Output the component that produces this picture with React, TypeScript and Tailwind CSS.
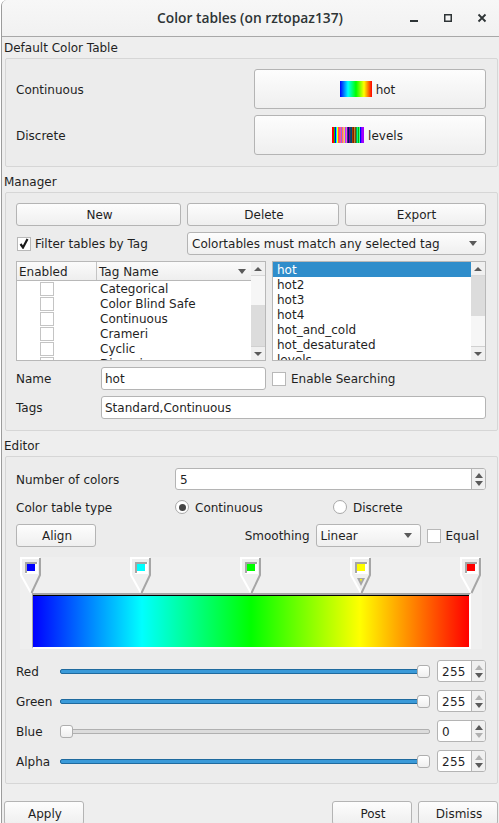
import React from "react";

const ink = "text-[#1f1f1f]";

function Tri({ up, color = "#5a5a5a", w = 9, h = 5 }: { up?: boolean; color?: string; w?: number; h?: number }) {
  return (
    <svg width={w} height={h} viewBox={`0 0 ${w} ${h}`} className="block">
      <polygon points={up ? `${w / 2},0 ${w},${h} 0,${h}` : `0,0 ${w},0 ${w / 2},${h}`} fill={color} />
    </svg>
  );
}

function L({ children, className = "" }: { children: React.ReactNode; className?: string }) {
  return <span className={`pt-[2px] ${className}`}>{children}</span>;
}

function Btn({ children, className = "" }: { children: React.ReactNode; className?: string }) {
  return (
    <div className={`flex items-center justify-center rounded-[3px] border border-[#b4b4b4] bg-linear-to-b from-[#fdfdfd] to-[#efefef] ${className}`}>
      {children}
    </div>
  );
}

function Combo({ text, className = "" }: { text: string; className?: string }) {
  return (
    <div className={`flex items-center justify-between rounded-[3px] border border-[#b4b4b4] bg-linear-to-b from-[#fdfdfd] to-[#efefef] pl-[4px] pr-[8px] ${className}`}>
      <L>{text}</L>
      <Tri w={8} h={5} />
    </div>
  );
}

function Check({ checked }: { checked?: boolean }) {
  return (
    <div className="flex h-[14px] w-[14px] shrink-0 items-center justify-center border border-[#b8b8b8] bg-white">
      {checked && (
        <svg width="10" height="11" viewBox="0 0 10 11">
          <path d="M1.5 6 L4 9.5 L8.5 1" fill="none" stroke="#1a1a1a" strokeWidth="2.2" />
        </svg>
      )}
    </div>
  );
}

function Radio({ on }: { on?: boolean }) {
  return (
    <div className="flex h-[14px] w-[14px] shrink-0 items-center justify-center rounded-full border border-[#a8a8a8] bg-white">
      {on && <div className="h-[7px] w-[7px] rounded-full bg-[#444444]" />}
    </div>
  );
}

function Input({ children, className = "" }: { children?: React.ReactNode; className?: string }) {
  return (
    <div className={`flex items-center rounded-[3px] border border-[#b4b4b4] bg-white pl-[3px] ${className}`}>
      <L>{children}</L>
    </div>
  );
}

function SpinArrows({ upDim, downDim }: { upDim?: boolean; downDim?: boolean }) {
  return (
    <div className="flex w-[14px] shrink-0 flex-col items-center justify-center gap-[3px] self-stretch border-l border-[#b4b4b4] bg-[#f0f0f0]">
      <Tri up color={upDim ? "#b0b0b0" : "#5a5a5a"} w={8} h={5} />
      <Tri color={downDim ? "#b0b0b0" : "#5a5a5a"} w={8} h={5} />
    </div>
  );
}

function Spin({ value, className = "", upDim, downDim }: { value: string; className?: string; upDim?: boolean; downDim?: boolean }) {
  return (
    <div className={`flex items-center overflow-hidden rounded-[3px] border border-[#b4b4b4] bg-white ${className}`}>
      <L className="flex-1 pl-[4px] tracking-[0.3px]">{value}</L>
      <SpinArrows upDim={upDim} downDim={downDim} />
    </div>
  );
}

function ScrollBar({ thumbTop, thumbH, thumbClass, className = "" }: { thumbTop: number; thumbH: number; thumbClass: string; className?: string }) {
  return (
    <div className={`relative flex w-[14px] shrink-0 flex-col justify-between bg-[#f6f6f6] ${className}`}>
      <div className="flex h-[14px] items-center justify-center border-b border-[#d8d8d8] bg-[#f0f0f0]">
        <Tri up w={8} h={4} />
      </div>
      <div className={`absolute left-0 right-0 ${thumbClass}`} style={{ top: thumbTop, height: thumbH }} />
      <div className="flex h-[14px] items-center justify-center border-t border-[#d0d0d0] bg-[#f0f0f0]">
        <Tri w={8} h={4} />
      </div>
    </div>
  );
}

function Group({ children, className = "" }: { children: React.ReactNode; className?: string }) {
  return (
    <div className={`ml-[3px] w-[493px] rounded-[2px] border border-[#d6d6d6] bg-[#ececec] pb-[11px] pl-[10px] pr-[11px] pt-[10px] ${className}`}>
      {children}
    </div>
  );
}

const stripes = [
  "#ff0000", "#ff0000", "#00d000", "#0000ff", "#00ffff", "#ffff00", "#ff6030", "#ff40a0",
  "#ff50a0", "#a060e0", "#ff8040", "#ff80c0", "#e0e040", "#a040ff", "#ff40ff", "#404060",
  "#000080", "#800080", "#204060", "#004080", "#a04000", "#802000", "#c08030", "#805000",
  "#00a060", "#00ff80", "#00c000", "#40ff80", "#0000ff", "#8000ff", "#a000ff", "#a000ff",
];

function LevelsIcon() {
  return (
    <svg width="32" height="16" className="block shrink-0">
      {stripes.map((c, i) => (
        <rect key={i} x={i} y={0} width={1} height={16} fill={c} />
      ))}
    </svg>
  );
}

function Marker({ left, color, active }: { left: number; color: string; active?: boolean }) {
  return (
    <svg width="22" height="37" viewBox="0 0 22 37" className="absolute top-0" style={{ left }}>
      <path d="M1 0 V18 L11 36" fill="none" stroke="#ffffff" strokeWidth="2" />
      <path d="M1 1 H20" fill="none" stroke="#ffffff" strokeWidth="2" />
      <path d="M20 1 V18 L11.5 36" fill="none" stroke="#a6a6a6" strokeWidth="2" />
      <rect x="5" y="5" width="13" height="12" fill="#ffffff" />
      <path d="M5 16 V5 H17 V7 H7 V16 Z" fill="#a6a6a6" />
      <rect x="7" y="7" width="8" height="7" fill={color} />
      {active && (
        <>
          <polygon points="7,21 15,21 11,29" fill="#a6a6a6" />
          <polygon points="10,22 12,22 11,25" fill={color} />
        </>
      )}
    </svg>
  );
}

function SliderRow({ label, value, on }: { label: string; value: string; on: boolean }) {
  return (
    <div className="flex h-[22px] items-center">
      <L className="w-[44px] shrink-0">{label}</L>
      <div className="relative flex h-[13px] w-[370px] shrink-0 items-center">
        {on ? (
          <div className="h-[5px] w-full rounded-[2px] border border-[#1f6a9e] bg-[#3a9ad9]" />
        ) : (
          <div className="h-[5px] w-full rounded-[2px] border border-[#b0b0b0] bg-[#dcdcdc]" />
        )}
        <div className={`absolute top-0 h-[13px] w-[13px] rounded-[3px] border border-[#aeaeae] bg-linear-to-b from-[#ffffff] to-[#efefef] ${on ? "right-0" : "left-0"}`} />
      </div>
      <Spin value={value} className="ml-auto h-[22px] w-[49px]" upDim={value === "255"} downDim={value === "0"} />
    </div>
  );
}

export default function App() {
  return (
    <div className={`flex h-[823px] w-[499px] flex-col overflow-hidden bg-white text-[12px] leading-[15px] ${ink} font-['DejaVu_Sans',sans-serif]`}>
      <div className="ml-[1px] flex h-[823px] flex-col overflow-hidden rounded-tl-[6px] border-l border-[#9c9c9c] bg-[#eeeeee]">
        {/* title bar */}
        <div className="flex h-[37px] shrink-0 items-center border-b border-[#a8a8a8] bg-linear-to-b from-[#f7f7f7] to-[#f1f1f1] pr-[12px]">
          <div className="flex-1 pb-[2px] pl-[155px] font-['Open_Sans',sans-serif] text-[13.8px] font-semibold text-[#2e3436]">
            Color tables (on rztopaz137)
          </div>
          <div className="flex items-center gap-[24px]">
            <svg width="10" height="10" viewBox="0 0 10 10" className="block">
              <rect x="1" y="7" width="8" height="2" fill="#2e3436" />
            </svg>
            <svg width="10" height="10" viewBox="0 0 10 10" className="block">
              <rect x="1.75" y="1.75" width="6.5" height="6.5" fill="none" stroke="#2e3436" strokeWidth="1.5" />
            </svg>
            <svg width="10" height="10" viewBox="0 0 10 10" className="block">
              <path d="M1.5 1.5 L8.5 8.5 M8.5 1.5 L1.5 8.5" stroke="#2e3436" strokeWidth="1.8" />
            </svg>
          </div>
        </div>

        {/* Default Color Table */}
        <div className="flex h-[21px] shrink-0 items-center pl-[2px] pt-[2px]">Default Color Table</div>
        <Group>
          <div className="flex h-[40px] items-center">
            <L className="w-[238px]">Continuous</L>
            <Btn className="h-full flex-1 gap-[4px] pr-[5px]">
              <div className="h-[16px] w-[32px] bg-[linear-gradient(to_right,#0000ff,#00ffff,#00ff00,#ffff00,#ff0000)]" />
              <L>hot</L>
            </Btn>
          </div>
          <div className="mt-[6px] flex h-[40px] items-center">
            <L className="w-[238px]">Discrete</L>
            <Btn className="h-full flex-1 gap-[4px] pr-[5px]">
              <LevelsIcon />
              <L>levels</L>
            </Btn>
          </div>
        </Group>

        {/* Manager */}
        <div className="flex h-[25px] shrink-0 items-end pb-[2px] pl-[2px]">Manager</div>
        <Group>
          <div className="flex h-[23px] gap-[6px]">
            <Btn className="w-[165px] pl-[2px]"><L>New</L></Btn>
            <Btn className="w-[152px] pl-[2px]"><L>Delete</L></Btn>
            <Btn className="w-[141px] pl-[2px]"><L>Export</L></Btn>
          </div>
          <div className="mt-[6px] flex h-[23px] items-center">
            <div className="flex w-[171px] items-center gap-[4px] pl-px">
              <Check checked />
              <L>Filter tables by Tag</L>
            </div>
            <Combo text="Colortables must match any selected tag" className="h-full flex-1" />
          </div>
          <div className="mt-[6px] flex h-[100px] gap-[6px]">
            <div className="flex w-[250px] overflow-hidden border border-[#b8b8b8] bg-white">
              <div className="min-w-0 flex-1 overflow-hidden">
                <div className="flex h-[19px] items-stretch border-b border-[#b8b8b8] bg-linear-to-b from-[#fbfbfb] to-[#eeeeee]">
                  <div className="flex w-[80px] items-center border-r border-[#c4c4c4] pl-[2px]"><L>Enabled</L></div>
                  <div className="flex flex-1 items-center justify-between pl-[2px] pr-[5px]">
                    <L>Tag Name</L>
                    <Tri w={8} h={5} />
                  </div>
                </div>
                {["Categorical", "Color Blind Safe", "Continuous", "Crameri", "Cyclic", "Diverging"].map((t) => (
                  <div key={t} className="flex h-[15px] items-center">
                    <div className="w-[80px] shrink-0 pl-[23px]">
                      <div className="h-[14px] w-[14px] border border-[#c4c4c4] bg-white" />
                    </div>
                    <L className="pl-[3px]">{t}</L>
                  </div>
                ))}
              </div>
              <ScrollBar thumbTop={43} thumbH={41} thumbClass="bg-[#dcdcdc]" />
            </div>
            <div className="flex flex-1 overflow-hidden border border-[#b8b8b8] bg-white">
              <div className="min-w-0 flex-1 overflow-hidden">
                <div className="flex h-[15px] items-center bg-[#2f8dcb] pl-[4px] text-white"><L>hot</L></div>
                {["hot2", "hot3", "hot4", "hot_and_cold", "hot_desaturated", "levels"].map((t) => (
                  <div key={t} className="flex h-[15px] items-center pl-[4px]"><L>{t}</L></div>
                ))}
              </div>
              <ScrollBar thumbTop={14} thumbH={40} thumbClass="bg-[#dcdcdc]" />
            </div>
          </div>
          <div className="mt-[6px] flex h-[23px] items-center">
            <L className="w-[85px]">Name</L>
            <Input className="h-full w-[165px]">hot</Input>
            <div className="ml-[6px] flex items-center gap-[5px]">
              <Check />
              <L>Enable Searching</L>
            </div>
          </div>
          <div className="mt-[6px] flex h-[23px] items-center">
            <L className="w-[85px]">Tags</L>
            <Input className="h-full flex-1">Standard,Continuous</Input>
          </div>
        </Group>

        {/* Editor */}
        <div className="flex h-[25px] shrink-0 items-end pb-[2px] pl-[2px]">Editor</div>
        <Group className="pt-[11px]">
          <div className="flex h-[22px] items-center">
            <L className="w-[159px]">Number of colors</L>
            <Spin value="5" className="h-full flex-1" />
          </div>
          <div className="mt-[7px] flex h-[20px] items-center">
            <L className="w-[159px]">Color table type</L>
            <div className="flex w-[158px] items-center gap-[6px]">
              <Radio on />
              <L>Continuous</L>
            </div>
            <div className="flex items-center gap-[6px]">
              <Radio />
              <L>Discrete</L>
            </div>
          </div>
          <div className="mt-[7px] flex h-[23px] items-center">
            <Btn className="h-full w-[80px] pl-[2px]"><L>Align</L></Btn>
            <L className="ml-auto mr-[6px]">Smoothing</L>
            <Combo text="Linear" className="h-full w-[105px]" />
            <div className="ml-[6px] mr-[7px] flex items-center gap-[5px]">
              <Check />
              <L>Equal</L>
            </div>
          </div>
          {/* colour table canvas */}
          <div className="relative ml-[4px] mt-[10px] h-[92px] w-[462px] bg-[#efefef]">
            <Marker left={0} color="#0000ff" />
            <Marker left={110} color="#00ffff" />
            <Marker left={220} color="#00ff00" />
            <Marker left={330} color="#ffff00" active />
            <Marker left={440} color="#ff0000" />
            <div className="absolute left-[12px] top-[36px] h-[56px] w-[439px] border-2 border-l-[1px] border-b-white border-l-[#a6a6a6] border-r-white border-t-[#a6a6a6]">
              <div className="h-px w-full bg-black" />
              <div className="h-[51px] w-full bg-[linear-gradient(to_right,#0000ff,#00ffff,#00ff00,#ffff00,#ff0000)]" />
            </div>
          </div>
          <div className="mt-[11px] flex flex-col gap-[8px]">
            <SliderRow label="Red" value="255" on />
            <SliderRow label="Green" value="255" on />
            <SliderRow label="Blue" value="0" on={false} />
            <SliderRow label="Alpha" value="255" on />
          </div>
        </Group>

        {/* footer */}
        <div className="mt-[17px] flex h-[24px] shrink-0 pl-[2px]">
          <Btn className="h-full w-[80px] pl-[2px]"><L>Apply</L></Btn>
          <Btn className="ml-auto h-full w-[80px] pl-[2px]"><L>Post</L></Btn>
          <Btn className="ml-[6px] mr-[1px] h-full w-[80px] pl-[2px]"><L>Dismiss</L></Btn>
        </div>
      </div>
    </div>
  );
}
